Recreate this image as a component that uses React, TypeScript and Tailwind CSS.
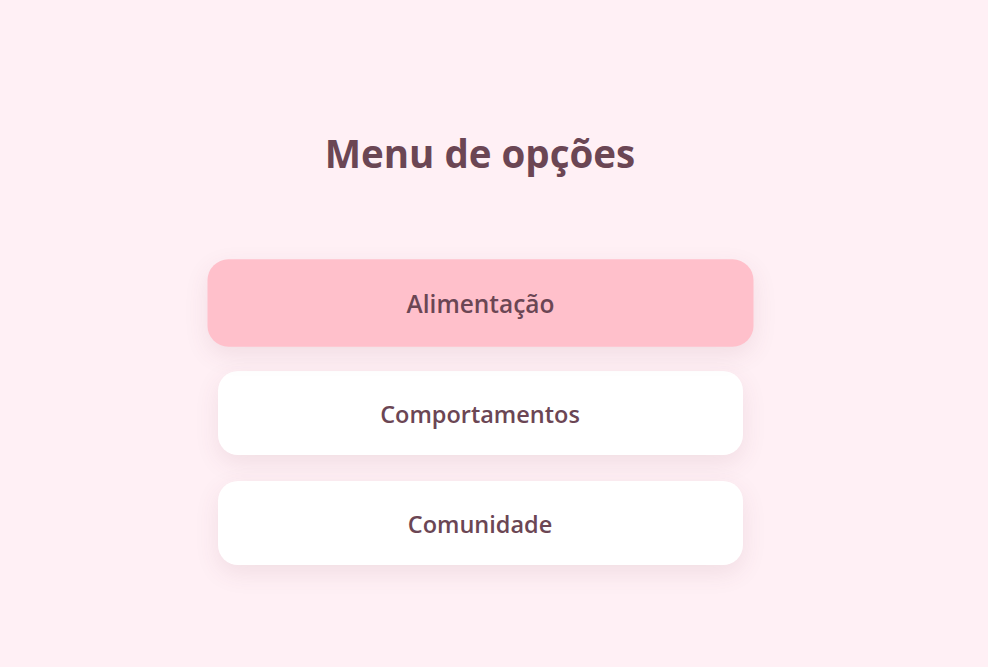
export default function App() {
  const items = ["Alimentação", "Comportamentos", "Comunidade"];
  return (
    <div
      className="min-h-[667px] w-full bg-[#fff0f5]"
      style={{ fontFamily: '"Open Sans", "Noto Sans", sans-serif' }}
    >
      <div className="flex w-[960px] flex-col items-center pt-[126px]">
        <h1 className="text-[38.5px] font-bold leading-[54px] text-[#6b4654]">Menu de opções</h1>
        <div className="mt-[81px] flex flex-col gap-[26px]">
          {items.map((t, i) => (
            <button
              key={t}
              className={`flex h-[84px] w-[525px] items-center justify-center rounded-[20px] pt-[4px] text-[23.5px] font-semibold text-[#6b4654] shadow-[0_8px_24px_rgba(120,60,80,0.10)] ${
                i === 0 ? "scale-[1.04] bg-[#ffc0cb]" : "bg-white"
              }`}
            >
              {t}
            </button>
          ))}
        </div>
      </div>
    </div>
  );
}
